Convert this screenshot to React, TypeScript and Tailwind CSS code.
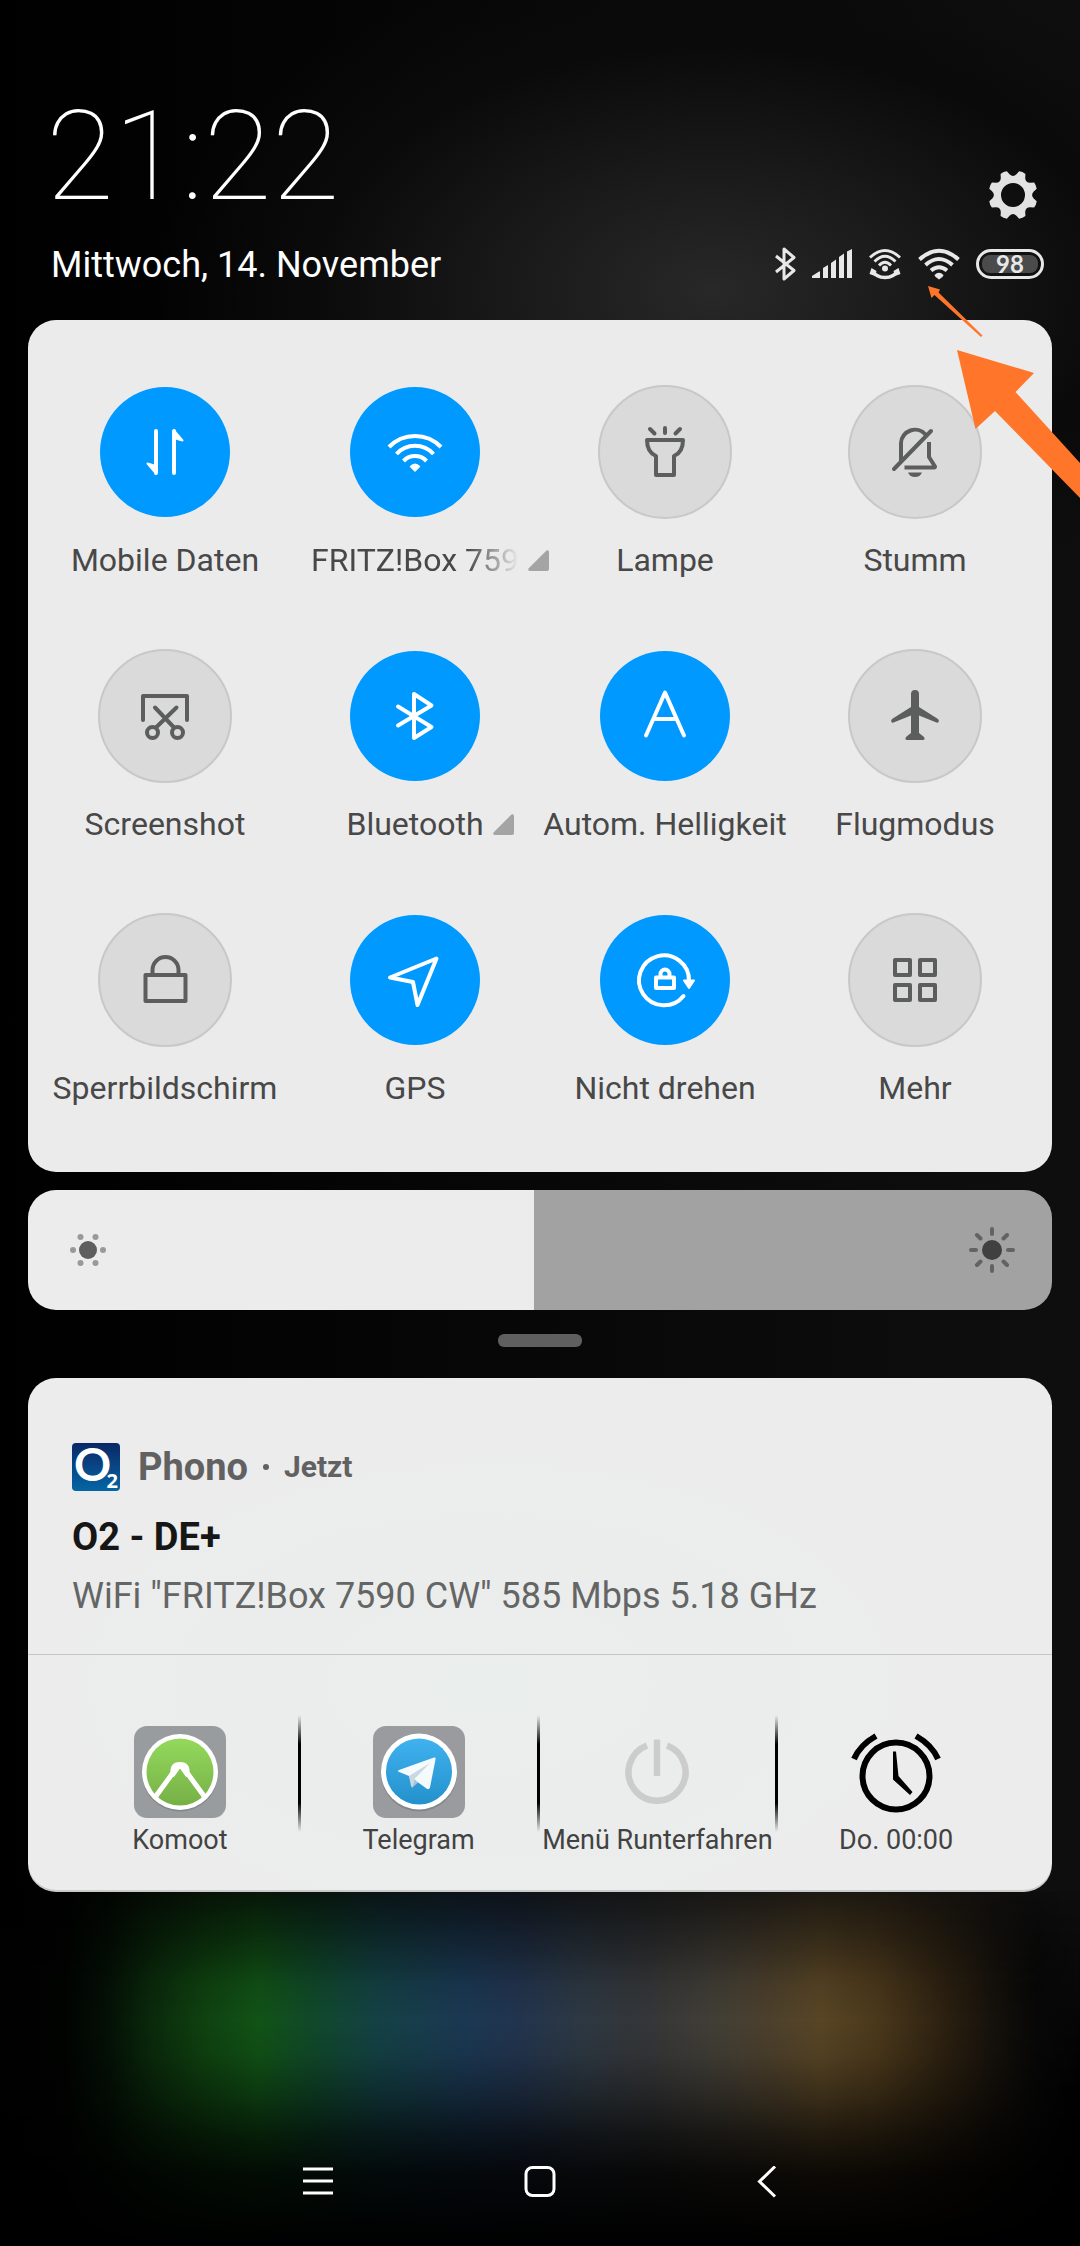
import { useState, type ReactNode } from "react";

const GEAR_PATH = Array.from({ length: 8 }, (_, i) => {
  const at = (radius: number, degrees: number) => {
    const angle = ((degrees - 90) * Math.PI) / 180;
    return `${(24 + radius * Math.cos(angle)).toFixed(2)} ${(24 + radius * Math.sin(angle)).toFixed(2)}`;
  };
  const a = i * 45 + 22.5;
  return `${i === 0 ? "M" : "L"}${at(21, a - 13)} L${at(24.5, a - 8)} Q${at(25.2, a)} ${at(24.5, a + 8)} L${at(21, a + 13)} Q${at(17.5, a + 22.5)} ${at(21, a + 32)}`;
}).join(" ");

function GearIcon() {
  return (
    <svg viewBox="0 0 48 48" className="size-12">
      <path
        d={`${GEAR_PATH} Z M24 12 a12 12 0 1 0 0 24 a12 12 0 1 0 0 -24 Z`}
        fill="#e2e2e2"
        fillRule="evenodd"
      />
    </svg>
  );
}

function StatusBluetooth() {
  return (
    <svg viewBox="0 0 22 34" className="h-[34px] w-[22px]" fill="none" stroke="#e8e8e8" strokeWidth="3" strokeLinejoin="round">
      <path d="M2 9 L20 23.5 L10 32 V2 L20 10.5 L2 25" />
    </svg>
  );
}

function StatusSignal() {
  return (
    <svg viewBox="0 0 40 30" className="h-[30px] w-10" fill="#e8e8e8">
      <path d="M0 29 V27 L7 22.5 H8 V29 Z" />
      <path d="M11 29 V19 L16 16 V29 Z" />
      <path d="M19 29 V14 L24 10.5 V29 Z" />
      <path d="M27 29 V8 L32 4.5 V29 Z" />
      <path d="M35 29 V2.5 L40 0 V29 Z" />
    </svg>
  );
}

function StatusHotspot() {
  return (
    <svg viewBox="0 0 34 34" className="h-[34px] w-[34px]" fill="none" stroke="#e8e8e8" strokeWidth="2.8">
      <path d="M2 10.5 Q17 -3.5 32 10.5" />
      <path d="M6.5 14.5 Q17 4 27.5 14.5" />
      <path d="M11 18.5 Q17 12 23 18.5" />
      <circle cx="17" cy="21.5" r="3" fill="#e8e8e8" stroke="none" />
      <path d="M5 24 Q8 30.5 17 30.5 T29 24" strokeWidth="3.5" />
      <path d="M1.5 27 L3.5 21 L8.5 24 L7 29 Z M32.5 27 L30.5 21 L25.5 24 L27 29 Z" fill="#e8e8e8" stroke="none" />
    </svg>
  );
}

function StatusWifi() {
  return (
    <svg viewBox="0 0 42 32" className="h-8 w-[42px]" fill="none" stroke="#e8e8e8" strokeWidth="4">
      <path d="M1.5 11.5 Q21 -6 40.5 11.5" />
      <path d="M7.5 17 Q21 5 34.5 17" />
      <path d="M13 22.5 Q21 16 29 22.5" />
      <path d="M16.5 27 q4.5 -4.5 9 0 q0 1.5 -4.5 4.5 q-4.5 -3 -4.5 -4.5 Z" fill="#e8e8e8" stroke="none" />
    </svg>
  );
}

function Glyph({ children }: { children: ReactNode }) {
  return (
    <svg
      viewBox="0 0 64 64"
      className="size-16"
      fill="none"
      stroke="currentColor"
      strokeWidth="4"
      strokeLinecap="round"
      strokeLinejoin="round"
    >
      {children}
    </svg>
  );
}

type Tile = { label: string; on?: boolean; more?: boolean; fade?: boolean; glyph: ReactNode };

const TILES: Tile[] = [
  {
    label: "Mobile Daten",
    on: true,
    glyph: (
      <>
        <path d="M23 11 V53 M41 11 V53" />
        <path d="M23 53.5 L14.5 43.5 L23 46 Z M41 10.5 L49.5 20.5 L41 18 Z" fill="currentColor" strokeWidth="2" />
      </>
    ),
  },
  {
    label: "FRITZ!Box 759",
    on: true,
    more: true,
    fade: true,
    glyph: (
      <>
        <g strokeLinecap="butt">
          <path d="M6 27 A36 36 0 0 1 58 27" />
          <path d="M13.5 34 A25 25 0 0 1 50.5 34" />
          <path d="M20.5 41 A16 16 0 0 1 43.5 41" />
        </g>
        <path d="M27.5 46.5 q4.5 -4.5 9 0 l-4.5 4.5 Z" fill="currentColor" strokeWidth="1.5" />
      </>
    ),
  },
  {
    label: "Lampe",
    glyph: (
      <>
        <path d="M32 8 V13 M17 9 L21.5 13.5 M47 9 L42.5 13.5" />
        <path d="M14 20 H50 C50 28 47 33.5 41 36 V55 H23 V36 C17 33.5 14 28 14 20 Z" />
      </>
    ),
  },
  {
    label: "Stumm",
    glyph: (
      <>
        <path d="M18 41 V23 A14 14 0 0 1 42.5 14.5" />
        <path d="M48 11 L11 49" />
        <path d="M46 22 V37 L52 46.5 Q52 47.5 51 47.5 H21.5" strokeLinecap="butt" />
        <path d="M25 52.5 H39 Q37 57 32 57 T25 52.5 Z" fill="currentColor" stroke="none" />
      </>
    ),
  },
  {
    label: "Screenshot",
    glyph: (
      <>
        <path d="M10 36 V12 H54 V36" />
        <path d="M22 23.5 L41 43.5 M43.5 23.5 L23 43.5" />
        <circle cx="19.5" cy="48.5" r="5.5" />
        <circle cx="44.5" cy="48.5" r="5.5" />
      </>
    ),
  },
  {
    label: "Bluetooth",
    on: true,
    more: true,
    glyph: <path d="M15 22.5 L48.5 43 L31 54 V10 L48.5 21.5 L15 41.5" />,
  },
  {
    label: "Autom. Helligkeit",
    on: true,
    glyph: <path d="M13 51.5 L32 8.5 L51 51.5 M21 35 H43" />,
  },
  {
    label: "Flugmodus",
    glyph: (
      <path
        d="M28 10 Q28 6 32 6 T36 10 V23 L55 35 Q56.5 36.5 55.5 38 Q55 39 53.5 38.5 L36 31.5 V49 L41 53 Q42.5 56 40 56 H24 Q21.5 56 23 53 L28 49 V31.5 L10.5 38.5 Q9 39 8.5 38 Q7.5 36.5 9 35 L28 23 Z"
        fill="currentColor"
        stroke="none"
      />
    ),
  },
  {
    label: "Sperrbildschirm",
    glyph: (
      <>
        <rect x="12.5" y="27" width="40" height="26" />
        <path d="M19.5 27 V22 A13 13 0 0 1 45.5 22 V27" />
      </>
    ),
  },
  {
    label: "GPS",
    on: true,
    glyph: <path d="M53.5 10.5 L7 29.5 L30 34 L34.5 57 Z" />,
  },
  {
    label: "Nicht drehen",
    on: true,
    glyph: (
      <>
        <path d="M56 33 A25 25 0 1 0 50.5 48" />
        <path d="M51 32.5 H61 L56 40 Z" fill="currentColor" strokeWidth="2" />
        <rect x="23" y="29.5" width="18" height="10.5" />
        <path d="M27.5 29 V26 A4.5 4.5 0 0 1 36.5 26 V29" />
      </>
    ),
  },
  {
    label: "Mehr",
    glyph: (
      <>
        <rect x="12" y="12" width="15" height="15" />
        <rect x="37" y="12" width="15" height="15" />
        <rect x="12" y="37" width="15" height="15" />
        <rect x="37" y="37" width="15" height="15" />
      </>
    ),
  },
];

function QuickTile({ tile }: { tile: Tile }) {
  return (
    <button type="button" aria-pressed={!!tile.on} className="flex flex-col items-center gap-[21px]">
      <span className="flex size-[134px] items-center justify-center">
        <span
          className={
            tile.on
              ? "flex size-[130px] items-center justify-center rounded-full bg-[#0099ff] text-white"
              : "flex size-[134px] items-center justify-center rounded-full border-2 border-[#c8c8c8] bg-[#dadada] text-[#5c5d5d]"
          }
        >
          <Glyph>{tile.glyph}</Glyph>
        </span>
      </span>
      <span className="relative">
        <span
          className={
            tile.fade
              ? "block text-[32px] leading-10 whitespace-nowrap text-[#484848] [mask-image:linear-gradient(to_right,black_75%,transparent)]"
              : "block text-[32px] leading-10 whitespace-nowrap text-[#484848]"
          }
        >
          {tile.label}
        </span>
        {tile.more && (
          <svg viewBox="0 0 21 21" className="absolute top-[10px] left-full ml-[9px] size-[21px]" fill="#a4a4a4">
            <path d="M18.5 0.5 Q21 -0.5 21 2 V19 Q21 21 19 21 H2 Q-0.5 21 0.5 18.5 Z" />
          </svg>
        )}
      </span>
    </button>
  );
}

function DimSun() {
  return (
    <svg viewBox="0 0 40 40" className="size-10">
      <circle cx="20" cy="20" r="9" fill="#5e5e5e" />
      <g fill="#999999">
        <circle cx="5" cy="20" r="3" />
        <circle cx="35" cy="20" r="3" />
        <circle cx="12.5" cy="7" r="3" />
        <circle cx="27.5" cy="7" r="3" />
        <circle cx="12.5" cy="33" r="3" />
        <circle cx="27.5" cy="33" r="3" />
      </g>
    </svg>
  );
}

function BrightSun() {
  return (
    <svg viewBox="0 0 48 48" className="size-12">
      <circle cx="24" cy="24" r="10" fill="#404040" />
      <path
        d="M24 3 V8 M24 40 V45 M3 24 H8 M40 24 H45 M9 9 L12.5 12.5 M39 9 L35.5 12.5 M9 39 L12.5 35.5 M39 39 L35.5 35.5"
        stroke="#636363"
        strokeWidth="4"
        strokeLinecap="round"
      />
    </svg>
  );
}

function BrightnessSlider() {
  const [level, setLevel] = useState(494);
  return (
    <div className="relative mx-7 mt-[18px]">
      <input
        type="range"
        aria-label="Helligkeit"
        min={0}
        max={1000}
        value={level}
        onChange={(e) => setLevel(Number(e.target.value))}
        className="block h-[120px] w-full appearance-none rounded-[28px] [&::-webkit-slider-thumb]:appearance-none [&::-webkit-slider-thumb]:opacity-0"
        style={{
          background: `linear-gradient(to right, #ececec ${level / 10}%, #a2a2a2 ${level / 10}%)`,
        }}
      />
      <span className="pointer-events-none absolute inset-0 flex items-center justify-between pr-9 pl-10">
        <DimSun />
        <BrightSun />
      </span>
    </div>
  );
}

function KomootIcon() {
  return (
    <svg viewBox="0 0 92 92" className="size-[92px]">
      <defs>
        <linearGradient id="komoot-green" x1="0" y1="0" x2="0" y2="1">
          <stop offset="0" stopColor="#93d95c" />
          <stop offset="1" stopColor="#76b046" />
        </linearGradient>
      </defs>
      <rect width="92" height="92" rx="13" fill="#999c9e" />
      <circle cx="46" cy="47.5" r="38" fill="#83878a" />
      <circle cx="46" cy="46" r="38" fill="#ffffff" />
      <circle cx="46" cy="46" r="33.5" fill="url(#komoot-green)" />
      <path d="M22 70 L41 44 M70 70 L51 44" stroke="#ffffff" strokeWidth="5" />
      <path d="M36.5 49 Q35 36 46 36 T55.5 49 L52 51 L46 42.5 L40 51 Z" fill="#ffffff" />
    </svg>
  );
}

function TelegramIcon() {
  return (
    <svg viewBox="0 0 92 92" className="size-[92px]">
      <defs>
        <linearGradient id="telegram-blue" x1="0" y1="0" x2="0" y2="1">
          <stop offset="0" stopColor="#40b2f0" />
          <stop offset="1" stopColor="#2391cb" />
        </linearGradient>
      </defs>
      <rect width="92" height="92" rx="13" fill="#999b9e" />
      <circle cx="46" cy="47.5" r="38" fill="#83878a" />
      <circle cx="46" cy="45.5" r="38" fill="#ffffff" />
      <circle cx="46" cy="45.5" r="33" fill="url(#telegram-blue)" />
      <path d="M25 45.5 Q24.5 44.5 26 44 L61 31.5 Q63 31 62.5 33.5 L57 61.5 Q56 64 53.5 62.5 L44.5 56 L39.5 60.5 L36 50 Z" fill="#f5fafd" />
      <path d="M36 50 L57 37 L41.5 53 L39.5 61.5 Q38.5 61.5 38 60 Z" fill="#c9d9e4" />
      <path d="M41.5 53 L39.5 61.5 L45 56.5 Z" fill="#a9c3d4" />
    </svg>
  );
}

function PowerIcon() {
  return (
    <svg viewBox="0 0 92 92" className="size-[92px]" fill="none" stroke="#cccccc" strokeWidth="6.5">
      <path d="M36 19.5 A28.5 28.5 0 1 0 56 19.5" />
      <path d="M46 13.5 V50" />
    </svg>
  );
}

function AlarmIcon() {
  return (
    <svg viewBox="0 0 92 92" className="size-[92px]" fill="none" stroke="#000000">
      <circle cx="46" cy="50" r="33.5" strokeWidth="6" />
      <path d="M4 33 Q10 19 26 10 M88 33 Q82 19 66 10" strokeWidth="6" />
      <path d="M43 25.5 H46 L48.5 50 L62.5 66 L60 69 L43 53.5 Z" fill="#000000" stroke="none" />
    </svg>
  );
}

const SHORTCUTS = [
  { label: "Komoot", icon: <KomootIcon /> },
  { label: "Telegram", icon: <TelegramIcon /> },
  { label: "Menü Runterfahren", icon: <PowerIcon /> },
  { label: "Do. 00:00", icon: <AlarmIcon /> },
];

function Separator() {
  return <span className="h-[117px] w-[3px] shrink-0 bg-[linear-gradient(to_bottom,transparent,black_25%,black_75%,transparent)]" />;
}

function Shortcuts() {
  return (
    <div className="flex items-start pt-[60px] pr-[38px] pb-9 pl-[34px]">
      {SHORTCUTS.map((shortcut, i) => (
        <div key={shortcut.label} className="contents">
          {i > 0 && <Separator />}
          <button type="button" className="flex min-w-0 flex-1 basis-0 flex-col items-center gap-[6px] pt-[11px]">
            {shortcut.icon}
            <span className="text-[27px] leading-8 whitespace-nowrap text-[#424242]">{shortcut.label}</span>
          </button>
        </div>
      ))}
    </div>
  );
}

function Notification() {
  return (
    <section className="mx-7 rounded-[28px] bg-[#ececec] bg-[radial-gradient(ellipse_at_45%_60%,#eaeeed_0%,#ececec_60%)] shadow-[inset_0_-2px_0_#c9cbca]">
      <div className="border-b border-[#c4c6c6] px-11 pt-[65px] pb-9">
        <div className="flex items-center">
          <span className="relative size-12 shrink-0 rounded bg-linear-to-b from-[#0a2766] to-[#0566a5] text-white">
            <span className="absolute top-0 left-[2px] font-[Lato] text-[46px] leading-[42px] font-bold">O</span>
            <span className="absolute right-[2px] bottom-0 font-['Open_Sans'] text-[20px] leading-5 font-bold">2</span>
          </span>
          <span className="ml-[18px] text-[38px] leading-[48px] font-bold text-[#616161]">Phono</span>
          <span className="mx-[15px] size-[6px] rounded-full bg-[#616161]" />
          <span className="text-[30px] leading-[48px] font-bold text-[#616161]">Jetzt</span>
        </div>
        <h2 className="mt-6 text-[38px] leading-[44px] font-bold text-[#161616]">O2 - DE+</h2>
        <p className="mt-[15px] text-[36px] leading-[44px] text-[#646565]">WiFi "FRITZ!Box 7590 CW" 585 Mbps 5.18 GHz</p>
      </div>
      <Shortcuts />
    </section>
  );
}

function Annotations() {
  return (
    <svg viewBox="0 0 152 212" className="pointer-events-none absolute top-[286px] right-0 h-[212px] w-[152px]" fill="#ff762a">
      <path d="M0 0 L12 3.5 L10.5 6.5 L54.5 49.5 L53 51 L6.5 9 L3.5 12 Z" />
      <path d="M29 64 L106 87 L87.5 106 L152 177 V212 L67 125 L47.5 143 Z" />
    </svg>
  );
}

function NavigationBar() {
  return (
    <nav className="relative flex justify-center gap-[190px]">
      <button type="button" aria-label="Letzte Apps">
        <svg viewBox="0 0 32 32" className="size-8" stroke="#ffffff" strokeWidth="3">
          <path d="M1 3 H31 M1 15 H31 M1 27 H31" />
        </svg>
      </button>
      <button type="button" aria-label="Startbildschirm">
        <svg viewBox="0 0 32 32" className="size-8" fill="none" stroke="#ffffff" strokeWidth="3">
          <rect x="2" y="1.5" width="28" height="28" rx="6.5" />
        </svg>
      </button>
      <button type="button" aria-label="Zurück">
        <svg viewBox="0 0 32 32" className="size-8" fill="none" stroke="#ffffff" strokeWidth="3">
          <path d="M29 0.500 L13.500 15.500 L29 30.500" />
        </svg>
      </button>
    </nav>
  );
}

export default function App() {
  return (
    <main className="relative flex min-h-screen flex-col overflow-hidden bg-[#050505] bg-[radial-gradient(560px_340px_at_66%_290px,#282828_0%,#1a1a1a_35%,#0a0a0a_72%,transparent_100%),linear-gradient(to_right,#000000,#060606_40%,#0e0e0e_95%)] font-[Roboto,sans-serif]">
      <header className="pt-[94px] pb-[37px]">
        <div className="flex items-end justify-between pr-[43px] pl-[46px]">
          <time className="text-[124px] leading-[126px] font-thin text-white">21:22</time>
          <button type="button" aria-label="Einstellungen" className="pb-px">
            <GearIcon />
          </button>
        </div>
        <div className="mt-[27px] flex items-center justify-between pr-9 pl-[51px]">
          <span className="text-[36px] leading-9 text-white">Mittwoch, 14. November</span>
          <div className="flex items-center gap-4 pb-[2px]">
            <StatusBluetooth />
            <StatusSignal />
            <StatusHotspot />
            <StatusWifi />
            <span className="flex h-[30px] w-[68px] items-center rounded-full border-[3px] border-[#e8e8e8] p-[3px]">
              <span className="flex h-[18px] w-full items-center justify-center rounded-lg bg-[#4b4b4b] font-[Lato] text-[24px] leading-6 font-bold text-[#e8e8e8]">
                98
              </span>
            </span>
          </div>
        </div>
      </header>

      <section className="mx-7 grid grid-cols-4 gap-y-[69px] rounded-[28px] bg-[#ebebeb] px-3 pt-[65px] pb-16">
        {TILES.map((tile) => (
          <QuickTile key={tile.label} tile={tile} />
        ))}
      </section>

      <BrightnessSlider />
      <span className="mx-auto mt-6 mb-[31px] h-[13px] w-[84px] rounded-md bg-[#5f5f5f]" />
      <Notification />

      <div className="relative flex flex-1 flex-col justify-end pt-60 pb-12">
        <div className="absolute inset-0 bg-linear-to-b from-transparent to-black to-60%" />
        <div className="absolute inset-0 bg-[linear-gradient(to_right,transparent_0%,#010301_6%,#041005_10%,#0a290b_14%,#0f4210_19%,#115316_24%,#10492a_29%,#144145_35%,#1b3853_43%,#22344e_48%,#2d3842_54%,#353638_60%,#413e36_66%,#4c402d_71%,#584525_76%,#4c391c_81%,#2e2211_87%,#15110b_92%,#070707_96%,transparent_100%)] [mask-image:linear-gradient(to_bottom,rgba(0,0,0,0.25)_0%,rgba(0,0,0,0.6)_14%,rgba(0,0,0,0.9)_26%,black_36%,rgba(0,0,0,0.92)_46%,rgba(0,0,0,0.68)_57%,rgba(0,0,0,0.38)_68%,rgba(0,0,0,0.14)_80%,transparent_100%)]" />
        <NavigationBar />
      </div>

      <Annotations />
    </main>
  );
}
